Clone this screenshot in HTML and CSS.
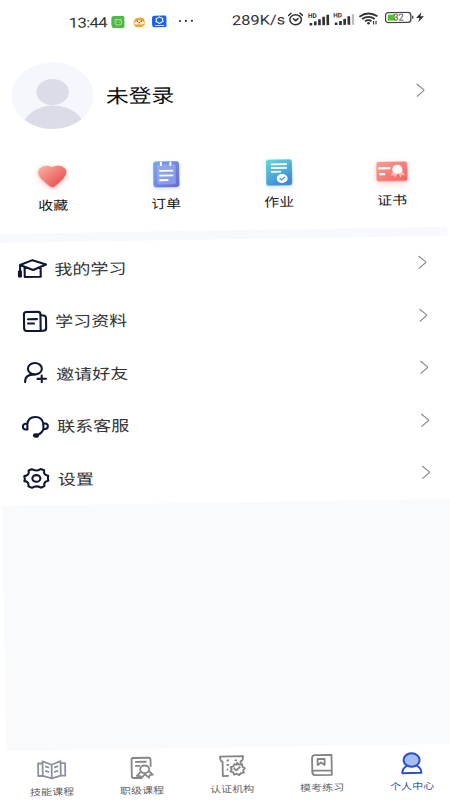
FILE: index.html
```html
<!DOCTYPE html>
<html lang="zh-CN">
<head>
<meta charset="utf-8">
<title>个人中心</title>
<link rel="stylesheet" href="styles.css">
</head>
<body>
<div class="app">
  <header class="status">
    <span></span>
    <span class="time">13:44</span>
    <svg class="w14" viewBox="0 0 14 12" height="12" preserveAspectRatio="none"><rect width="14" height="12" rx="3" fill="#4eb944"/><ellipse cx="7" cy="6.2" rx="3.4" ry="2.700" fill="none" stroke="#a5dd9b"/><path d="M4 3l1.3 1M10 3L8.7 4M5.5 5.6v1M8.500 5.600v1" stroke="#c9efc2" stroke-width=".9"/></svg>
    <svg class="w13" viewBox="0 0 13 11" height="11" preserveAspectRatio="none"><path d="M2 3Q3 .5 5 1.500Q8 0 10 1.500Q12 2 11.500 4Q13 6 12 8Q10 11 6.500 10.500Q2 11 1 8Q0 6 2 3Z" fill="#f0a231"/><path d="M2 5.500Q6 1.500 11 5.500L12 7Q9 8.500 6.500 7.500Q3 8.500 1 7Z" fill="#fff3da"/><path d="M4.500 3.800v1.500M8.500 3.800v1.500M5.500 6h2" stroke="#70401a" stroke-width="1"/></svg>
    <svg class="w15" viewBox="0 0 15 12" height="12" preserveAspectRatio="none"><rect width="15" height="12" rx="2.500" fill="#1d62ea"/><path d="M7.500 1.500l1.500 1 1.800.5-.3 1.700.7 1.400-1.700.8-2 1.200-2-1.200-1.700-.8.7-1.400-.3-1.700L6 2.500Z" fill="none" stroke="#fff"/><path d="M3 10.200h9" stroke="#d7e5ff" stroke-width="1"/></svg>
    <svg class="w15" viewBox="0 0 15 4" height="4" preserveAspectRatio="none"><g fill="#333"><circle cx="1.500" cy="2" r="1.100"/><circle cx="7.500" cy="2" r="1.100"/><circle cx="13.500" cy="2" r="1.100"/></g></svg>
    <span class="speed">289K/s</span>
    <svg class="w16" viewBox="0 0 16 14" height="14" preserveAspectRatio="none"><g fill="none" stroke="#333" stroke-width="1.500" stroke-linecap="round"><ellipse cx="8" cy="7.500" rx="5.800" ry="5"/><path d="M1 3.300L3.500 1M15 3.300L12.500 1M5.800 6.500L8 8.500l2.500-2"/></g></svg>
    <svg class="w22" viewBox="0 0 22 13" height="13" preserveAspectRatio="none"><text x="0" y="5" class="hd">HD</text><path d="M2.800 12.500v-2.500M7.200 12.500v-4M11.400 12.500v-6M15.600 12.500v-8.500M19.800 12.500v-10.500" stroke="#333" stroke-width="2.700"/></svg>
    <svg class="w22" viewBox="0 0 22 13" height="13" preserveAspectRatio="none"><text x="0" y="5" class="hd">HD</text><path d="M2.800 12.500v-2.500M7.200 12.500v-4M11.400 12.500v-6M15.600 12.500v-8.500" stroke="#333" stroke-width="2.700"/><path d="M19.800 12.500v-10.500" stroke="#bbb" stroke-width="2.300"/></svg>
    <svg class="w20" viewBox="0 0 20 13" height="13" preserveAspectRatio="none"><g fill="none" stroke="#333" stroke-width="1.800"><path d="M1 4.500Q10-1.500 19 4.500M3.700 7Q10 2.600 16.300 7M6.500 9.300Q10 7 13 9.300"/></g><circle cx="10" cy="11.300" r="1.300" fill="#333"/><path d="M15 9v3.500M17.500 9v3.500" stroke="#333" stroke-width="1.200"/></svg>
    <svg class="w29" viewBox="0 0 29 12" height="12" preserveAspectRatio="none"><rect x=".7" y="1" width="25.300" height="10" rx="2.800" fill="#fff" stroke="#444" stroke-width="1.300"/><rect x="3" y="3" width="7" height="6" fill="#55c22d"/><path d="M28 4.500v3" stroke="#444" stroke-width="1.500"/><text x="8.300" y="9" class="charge">32</text></svg>
    <svg class="w8" viewBox="0 0 8 10" height="10" preserveAspectRatio="none"><path d="M5.500 0L0 5.700H3.500L2 10L8 4.200H4.500Z" fill="#333"/></svg>
  </header>

  <section class="profile">
    <svg class="avatar" viewBox="0 0 82 67" preserveAspectRatio="none"><defs><clipPath id="face"><ellipse cx="41" cy="33.500" rx="41" ry="33.500"/></clipPath></defs><g clip-path="url(#face)"><rect width="82" height="67" fill="#f5f7fc"/><g fill="#dadde7"><ellipse cx="41" cy="30" rx="16.200" ry="13"/><ellipse cx="41" cy="67" rx="31" ry="23.500"/></g></g></svg>
    <h1 class="name">未登录</h1>
    <svg class="chevron" viewBox="0 0 9 14" preserveAspectRatio="none"><path d="M.7.700L8.200 7L.7 13.300"/></svg>
  </section>

  <nav class="shortcuts">
    <a class="shortcut"><svg class="tile" viewBox="0 0 40 38" preserveAspectRatio="none"><defs><linearGradient id="red" x1="0" y1="0" x2="1" y2="1"><stop stop-color="#fab5a6"/><stop offset="1" stop-color="#e53e40"/></linearGradient></defs><path class="red-glow" fill="url(#red)" d="M20 30.500Q18 30.500 9 22Q3.500 16 7 11.500Q12 6.500 20 10Q28 6.500 33 11.500Q36.500 16 31 22Q22 30.500 20 30.500Z"/></svg>收藏</a>
    <a class="shortcut"><svg class="tile" viewBox="0 0 40 38" preserveAspectRatio="none"><defs><linearGradient id="violet" x1="0" y1="0" x2="1" y2="1"><stop stop-color="#79abe8"/><stop offset="1" stop-color="#6767d1"/></linearGradient></defs><rect class="blue-glow" x="7" y="6" width="26" height="26" rx="3" fill="url(#violet)"/><rect x="10.500" y="9" width="19" height="20" rx="2" fill="#a4b3f4" opacity=".55"/><path d="M14.800 6.500v4M24.300 6.500v4M13 15.500h14M13 20.200h14M13 24.800h9" stroke="#fff" stroke-width="1.900"/></svg>订单</a>
    <a class="shortcut"><svg class="tile" viewBox="0 0 40 38" preserveAspectRatio="none"><defs><linearGradient id="cyan" x1="0" y1="0" x2=".5" y2="1"><stop stop-color="#65dad6"/><stop offset="1" stop-color="#3f8bd8"/></linearGradient></defs><rect class="blue-glow" x="7" y="6" width="26" height="26" rx="2.500" fill="url(#cyan)"/><path d="M12 10.700h16M12 14.400h16M12 18.200h10" stroke="#fff" stroke-width="1.800"/><ellipse cx="23" cy="25" rx="5.500" ry="4.500" fill="#fff"/><path d="M20.500 24.800l2 1.700 3.500-3" fill="none" stroke="#3b9bd2" stroke-width="1.300"/></svg>作业</a>
    <a class="shortcut"><svg class="tile" viewBox="0 0 40 38" preserveAspectRatio="none"><defs><linearGradient id="coral" x1="0" y1="0" x2="1" y2="1"><stop stop-color="#fa9d93"/><stop offset="1" stop-color="#f46261"/></linearGradient></defs><rect class="red-glow" x="4.500" y="10" width="31" height="19.500" rx="2.500" fill="url(#coral)"/><path d="M6.500 16.500h12M7.500 22.300h5.500" stroke="#fff" stroke-width="2.200"/><path d="M22 17l-3.500 7 3-.5 2 2.500 2.500-5 2.500 5 1.500-2.500 3 .5-3.500-7Z" fill="#fdb5ae"/><ellipse cx="25.500" cy="17.700" rx="5" ry="4.500" fill="#fff"/></svg>证书</a>
  </nav>

  <div class="divider"></div>

  <main class="menu">
    <a class="row"><svg class="icon" viewBox="0 0 30 26" preserveAspectRatio="none"><path d="M3 9.300L15.500 4.700L29 9.300L16 14.500ZM7.500 11.500V21.500H23.500V12M3 9.300V15"/><path d="M1.500 15.500h2.500v5.500h-2.500Z" fill="#111638" stroke-width="1.500"/></svg><span>我的学习</span><svg class="chevron" viewBox="0 0 9 14" preserveAspectRatio="none"><path d="M.7.700L8.200 7L.7 13.300"/></svg></a>
    <a class="row"><svg class="icon" viewBox="0 0 30 26" preserveAspectRatio="none"><path d="M8.500 3.500H20Q22.500 3.500 22.500 6V22.500H8.500Q6 22.500 6 20V6Q6 3.500 8.500 3.500ZM22.500 7Q28 6.500 28 10V20Q28 22.500 25 22.500H22.500M10 10.700h9M10 15h6"/></svg><span>学习资料</span><svg class="chevron" viewBox="0 0 9 14" preserveAspectRatio="none"><path d="M.7.700L8.200 7L.7 13.300"/></svg></a>
    <a class="row"><svg class="icon" viewBox="0 0 30 26" preserveAspectRatio="none"><ellipse cx="16" cy="8.300" rx="7" ry="5.700"/><path d="M16 14Q6 13.500 6 21.500M18.500 18.500h8.500M22.700 15.300v6.500"/></svg><span>邀请好友</span><svg class="chevron" viewBox="0 0 9 14" preserveAspectRatio="none"><path d="M.7.700L8.200 7L.7 13.300"/></svg></a>
    <a class="row"><svg class="icon" viewBox="0 0 30 26" preserveAspectRatio="none"><path d="M7.500 16V10.500Q8.500 3.500 15.500 3.500Q22.500 3.500 23.500 10.500V15.500Q22.500 20 17 21.700M7.500 10Q3 10 3 13Q3 16 7.500 16ZM23.500 10Q28 10 28 13Q28 16 23.500 16Z"/><ellipse cx="16" cy="22" rx="2" ry="1.200" fill="#111638"/></svg><span>联系客服</span><svg class="chevron" viewBox="0 0 9 14" preserveAspectRatio="none"><path d="M.7.700L8.200 7L.7 13.300"/></svg></a>
    <a class="row"><svg class="icon" viewBox="0 0 30 26" preserveAspectRatio="none"><path d="M8 5L11 3.700Q15.500 6.500 20 3.700L23.500 5Q22.500 10 27.500 10.500Q26.500 13 27.500 15.500Q22.500 16 23.500 20.800L20 22.300Q15.500 19.500 11 22.300L7.500 20.800Q8.500 16 3.500 15.500Q4.500 13 3.500 10.500Q9 10 8 5Z"/><ellipse cx="15.600" cy="13" rx="4" ry="3.300"/></svg><span>设置</span><svg class="chevron" viewBox="0 0 9 14" preserveAspectRatio="none"><path d="M.7.700L8.200 7L.7 13.300"/></svg></a>
  </main>

  <div class="blank"></div>

  <footer class="tabs">
    <a class="tab"><svg class="tab-icon" viewBox="0 0 30 24" preserveAspectRatio="none"><path stroke="#8d919e" d="M15 7.500V21L6 18.500V4L15 7.500L24 4V18.500L15 21M6 6H1.500V18.500H6M24 6h4.500V18.500H24M8.500 9l4 1.300M8.500 13.500l4 1.300M21.500 9l-4 1.300M21.500 13.500l-4 1.300"/></svg>技能课程</a>
    <a class="tab"><svg class="tab-icon" viewBox="0 0 30 24" preserveAspectRatio="none"><path d="M14 22H6.500Q5 22 5 20.500V3.500Q5 2 6.500 2H22Q24 2 24 4V11M8.500 6h11.500M8.500 10h5M14 16l-4 4 3.500.3 1 2 4-4.300M22 15.500l4 3.500-3 .5-1 2.500-4-4"/><ellipse cx="18" cy="13.500" rx="4.500" ry="3.800"/></svg>职级课程</a>
    <a class="tab"><svg class="tab-icon" viewBox="0 0 30 24" preserveAspectRatio="none"><path d="M12 21.500H6V7Q3.500 7 3.500 2H26.500Q26.500 7 24 7V9.500M10 6h2.500M18 6h2.500M10 10.500h2.500M10 15h1.500M17 13.500l2.500 2.500 4-3.500"/><path d="M20.500 8.500l2 1.800 3-.3.200 2.500 2.500 1.500-1.800 2 .7 2.500-3 .3-1.700 2-2.400-1.300-2.700.8-.8-2.200-2.800-1 1.300-2.100-1.100-2.200 2.900-.8.800-2.200 2.600.6Z"/></svg>认证机构</a>
    <a class="tab"><svg class="tab-icon" viewBox="0 0 30 24" preserveAspectRatio="none"><path d="M25 17.500V2H8.500Q5.500 2 5.500 5V19Q5.500 22 8.500 22H25V17.500H8Q5.500 17.500 5.500 19.500M11 6h7v6l-3.500-2.500L11 12Z"/></svg>模考练习</a>
    <a class="tab active"><svg class="tab-icon" viewBox="0 0 30 24" preserveAspectRatio="none"><ellipse cx="15" cy="8.500" rx="8" ry="6.700" fill="#a6bcf8"/><path d="M10 14.500Q5.500 16.500 5.500 21.500H24.500Q24.500 16.500 20 14.500"/></svg>个人中心</a>
  </footer>
</div>
</body>
</html>
```

FILE: styles.css
```css
* { box-sizing: border-box; }
body {
  margin: 0;
  width: 450px;
  height: 800px;
  overflow: hidden;
  background: #fff;
  font-family: "Noto Sans CJK SC", sans-serif;
}
/* The whole screen is widened and tilted slightly. */
.app {
  display: flex;
  flex-direction: column;
  width: 375px;
  height: 800px;
  transform: matrix(1.2, -0.0192, 0.0175, 1, -6.8, 0);
  transform-origin: 0 0;
}
svg { display: block; }
.status {
  display: grid;
  grid-template-columns: 62.500px 35px 18px 16px 22.500px 44.600px 46.500px 17px 20.800px 21.600px 21.700px 26px 10px;
  align-items: center;
  height: 48px;
  color: #333;
  font-family: Roboto, sans-serif;
  white-space: nowrap;
}
.time { font-size: 14px; letter-spacing: -0.600px; }
.speed { font-size: 13.700px; }
.time, .speed { padding-bottom: 1px; }
.hd { font: 700 6.500px Roboto, sans-serif; fill: #333; }
.charge { font: 9.500px Roboto, sans-serif; fill: #444; }
.w8 { width: 6.700px; }
.w13 { width: 10.800px; }
.w14 { width: 11.700px; }
.w15 { width: 12.500px; }
.w16 { width: 13.300px; }
.w20 { width: 16.700px; }
.w22 { width: 18.300px; }
.w29 { width: 24.200px; }

.profile {
  display: flex;
  align-items: center;
  height: 97px;
  padding: 0 16.800px 0 14.200px;
}
.avatar { width: 68.300px; height: 67px; }
.name {
  flex: 1;
  margin: 0 0 0 10px;
  font-size: 19px;
  font-weight: 400;
  color: #111;
}
.chevron {
  width: 7.500px;
  height: 14px;
  margin-left: auto;
  fill: none;
  stroke: #858585;
  stroke-width: 1.100;
}
.shortcuts {
  display: grid;
  grid-template-columns: repeat(4, 1fr);
  width: 376.500px;
  height: 89px;
  padding-top: 13px;
}
.shortcut {
  display: flex;
  flex-direction: column;
  align-items: center;
  font-size: 12.500px;
  line-height: 20px;
  color: #181818;
}
.tile { width: 33.300px; height: 38px; overflow: visible; }
.red-glow { filter: drop-shadow(0 2px 3px rgba(250, 100, 90, .3)); }
.blue-glow { filter: drop-shadow(0 2px 2px rgba(90, 150, 240, .25)); }
.divider { height: 9px; background: #f7f9fc; }
.menu { height: 262.500px; }
.row {
  display: flex;
  align-items: center;
  height: 52.500px;
  padding: 0 18px 0 16.300px;
  font-size: 15px;
  color: #333;
}
.icon {
  width: 25px;
  height: 26px;
  margin-right: 5.700px;
  fill: none;
  stroke: #111638;
  stroke-width: 2.100;
  stroke-linecap: round;
  stroke-linejoin: round;
}
.blank { height: 245.500px; background: #f8fafc; }
.tabs {
  display: grid;
  grid-template-columns: repeat(5, 1fr);
  height: 49px;
}
.tab {
  display: flex;
  flex-direction: column;
  align-items: center;
  padding-top: 7px;
  font-size: 9.200px;
  line-height: 17px;
  color: #666;
}
.tab-icon {
  width: 25px;
  height: 24px;
  margin-bottom: 2px;
  fill: none;
  stroke: #858585;
  stroke-width: 1.800;
  stroke-linejoin: round;
}
.active { color: #3453a7; }
.active .tab-icon { stroke: #2950c7; stroke-width: 2; }
```
